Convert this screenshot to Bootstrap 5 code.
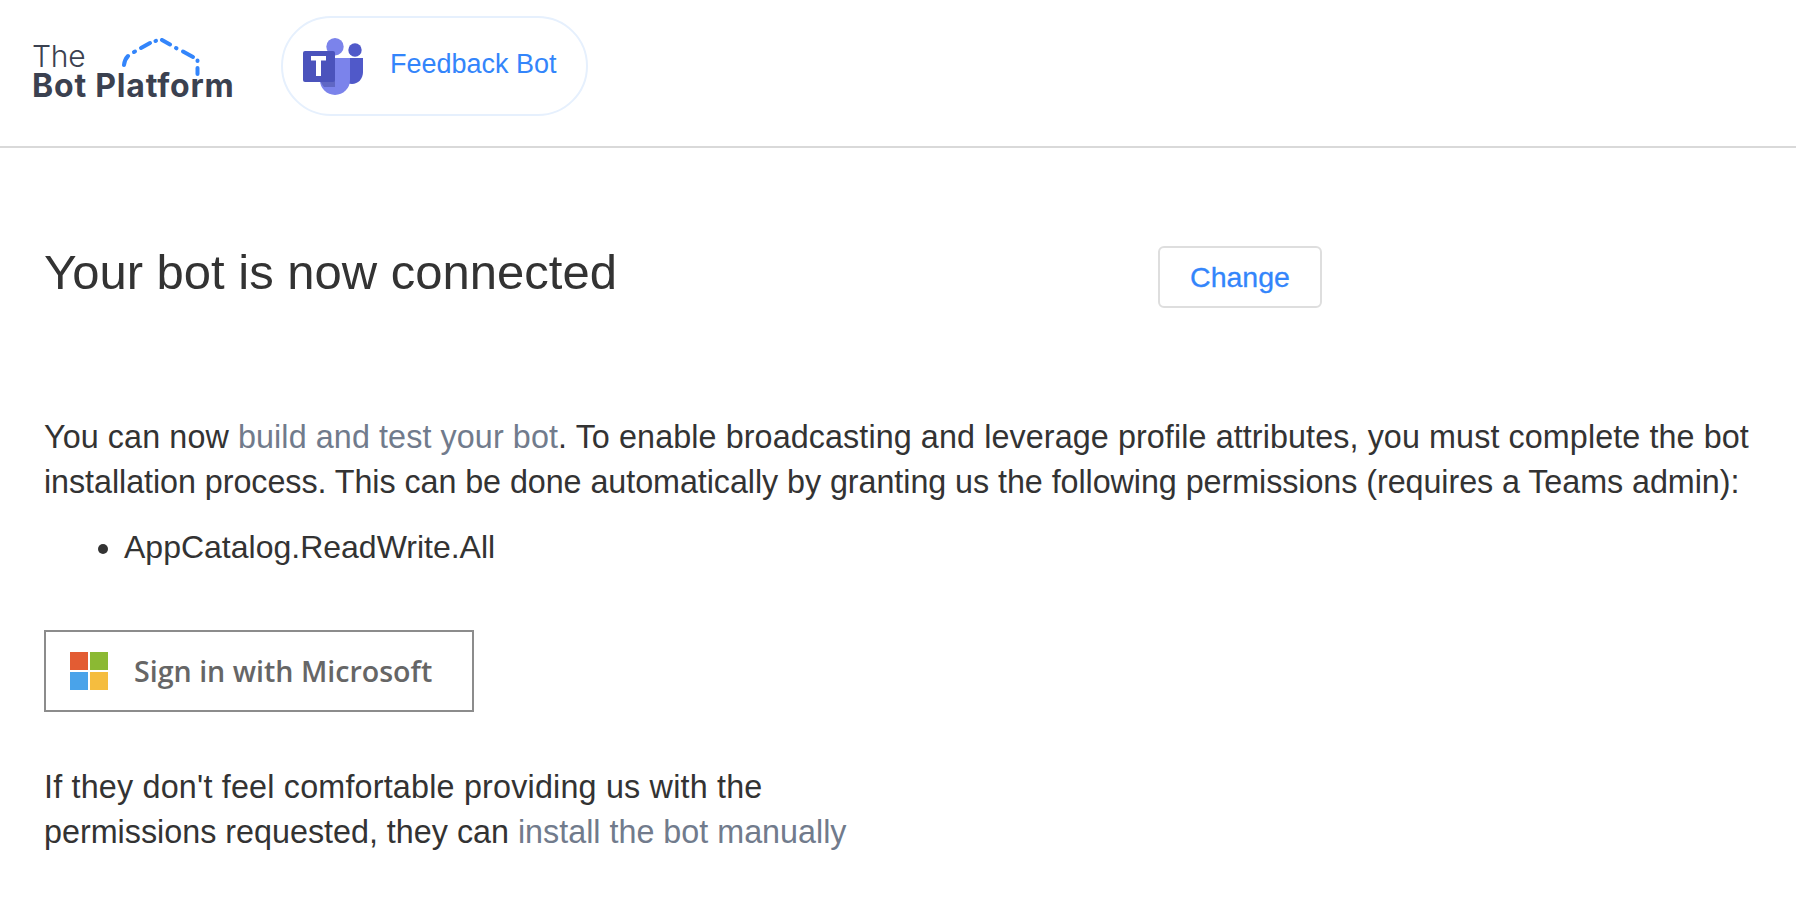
<!DOCTYPE html>
<html lang="en">
<head>
    <meta charset="UTF-8">
    <meta name="viewport" content="width=device-width, initial-scale=1.0">
    <title>Feedback Bot</title>
    <link rel="stylesheet" href="https://cdn.jsdelivr.net/npm/bootstrap@5.3.0/dist/css/bootstrap.min.css">
    <style>
        body { font-family: "Liberation Sans", Arial, sans-serif; color: #333; background: #fff; }
        .top-bar { height: 148px; border-bottom: 2px solid #d9d9d9; padding: 16px 0 0 32px; }
        .brand-logo { position: relative; width: 200px; height: 99px; margin-right: 49px; font-family: Inter, sans-serif; color: #3b4150; padding-top: 25px; }
        .brand-the { font-size: 30px; line-height: 31px; font-weight: 300; letter-spacing: -.3px; }
        .brand-name { font-size: 32px; line-height: 28px; font-weight: 700; white-space: nowrap; letter-spacing: .8px; }
        .brand-roof { position: absolute; left: 90px; top: 22px; }
        .bot-pill { width: 307px; height: 100px; border: 2px solid #e6f0fd; border-radius: 50px; padding-left: 20px; }
        .bot-name { font-size: 27px; color: #3385fb; margin-left: 27px; margin-top: -4px; }
        .page-body { padding: 0 44px; }
        .title-row { padding-top: 96px; height: 267px; }
        .title-text { width: 1114px; font-size: 49px; line-height: 56px; font-weight: 400; margin: 0; }
        .btn-change { width: 164px; height: 62px; font-size: 28.500px; line-height: 1; color: #3385fb; border: 2px solid #dedede; border-radius: 6px; background: #fff; margin-top: 2px; -webkit-text-stroke: .3px #3385fb; }
        .intro-text { font-size: 32.300px; line-height: 45px; margin-bottom: 20px; white-space: nowrap; }
        .line-wide { letter-spacing: .1px; }
        .line-tight { letter-spacing: -.06px; }
        .foot-wide { letter-spacing: .2px; }
        .muted-link { color: #717b8c; text-decoration: none; }
        .perm-list { font-size: 32px; line-height: 45px; padding-left: 80px; margin-bottom: 60px; }
        .ms-btn { width: 430px; height: 82px; border: 2px solid #8c8c8c; background: #fff; padding-left: 24px; font-family: "Open Sans", sans-serif; font-size: 28.600px; font-weight: 600; color: #666; }
        .ms-btn svg { margin-right: 26px; }
        .foot-text { font-size: 32.300px; line-height: 45px; margin-top: 53px; }
    </style>
</head>
<body>
    <div class="top-bar d-flex align-items-start">
        <div class="brand-logo">
            <div class="brand-the">The</div>
            <div class="brand-name">Bot Platform</div>
            <svg class="brand-roof" width="84" height="48" viewBox="0 0 84 48" fill="none" stroke="#3385fb" stroke-width="4" stroke-linecap="round">
                <path d="M2 27 C2.500 23 3 21 6 18"/>
                <path d="M12 14 L13 13.500"/>
                <path d="M19 10 L28 5"/>
                <path d="M33.500 3 L34 2.800"/>
                <path d="M40 2 L48 6.500"/>
                <path d="M54 10 L54.500 10.300"/>
                <path d="M61 13.500 L71 19"/>
                <path d="M75.500 22.500 L75.500 23"/>
                <path d="M75.500 30 L75.500 36"/>
            </svg>
        </div>
        <div class="bot-pill d-flex align-items-center">
            <svg width="60" height="57" viewBox="0 0 60 57">
                <circle cx="52" cy="12" r="6.700" fill="#5059c9"/>
                <path d="M44 20 H60 V34 C60 41 55 46 49 46 C46 46 44 45 44 45 Z" fill="#5059c9"/>
                <circle cx="32" cy="8.700" r="8.700" fill="#7b83eb"/>
                <path d="M17 20 H47 V42 A15 15 0 0 1 17 42 Z" fill="#7b83eb"/>
                <path d="M17 20 H32 V49 H21 C18.500 46 17 43 17 40 Z" fill="#454b9e" opacity=".5"/>
                <rect x="0" y="13" width="32" height="31" rx="2" fill="#4b53bc"/>
                <path d="M8 18 H23 V22.500 H18 V38 H13 V22.500 H8 Z" fill="#fff"/>
            </svg>
            <span class="bot-name">Feedback Bot</span>
        </div>
    </div>

    <div class="page-body">
        <div class="title-row d-flex align-items-start">
            <h1 class="title-text">Your bot is now connected</h1>
            <button type="button" class="btn btn-change p-0">Change</button>
        </div>

        <p class="intro-text"><span class="line-wide">You can now <a class="muted-link" href="#">build and test your bot</a>. To enable broadcasting and leverage profile attributes, you must complete the bot</span><br><span class="line-tight">installation process. This can be done automatically by granting us the following permissions (requires a Teams admin):</span></p>

        <ul class="perm-list">
            <li>AppCatalog.ReadWrite.All</li>
        </ul>

        <button type="button" class="ms-btn d-flex align-items-center">
            <svg width="38" height="38" viewBox="0 0 38 38">
                <rect x="0" y="0" width="18" height="18" fill="#e35c33"/>
                <rect x="20" y="0" width="18" height="18" fill="#8bb933"/>
                <rect x="0" y="20" width="18" height="18" fill="#49a3ea"/>
                <rect x="20" y="20" width="18" height="18" fill="#f5bd3f"/>
            </svg>
            Sign in with Microsoft
        </button>

        <p class="foot-text"><span class="foot-wide">If they don't feel comfortable providing us with the</span><br>permissions requested, they can <a class="muted-link" href="#">install the bot manually</a></p>
    </div>

    <script src="https://cdn.jsdelivr.net/npm/bootstrap@5.3.0/dist/js/bootstrap.bundle.min.js"></script>
</body>
</html>
